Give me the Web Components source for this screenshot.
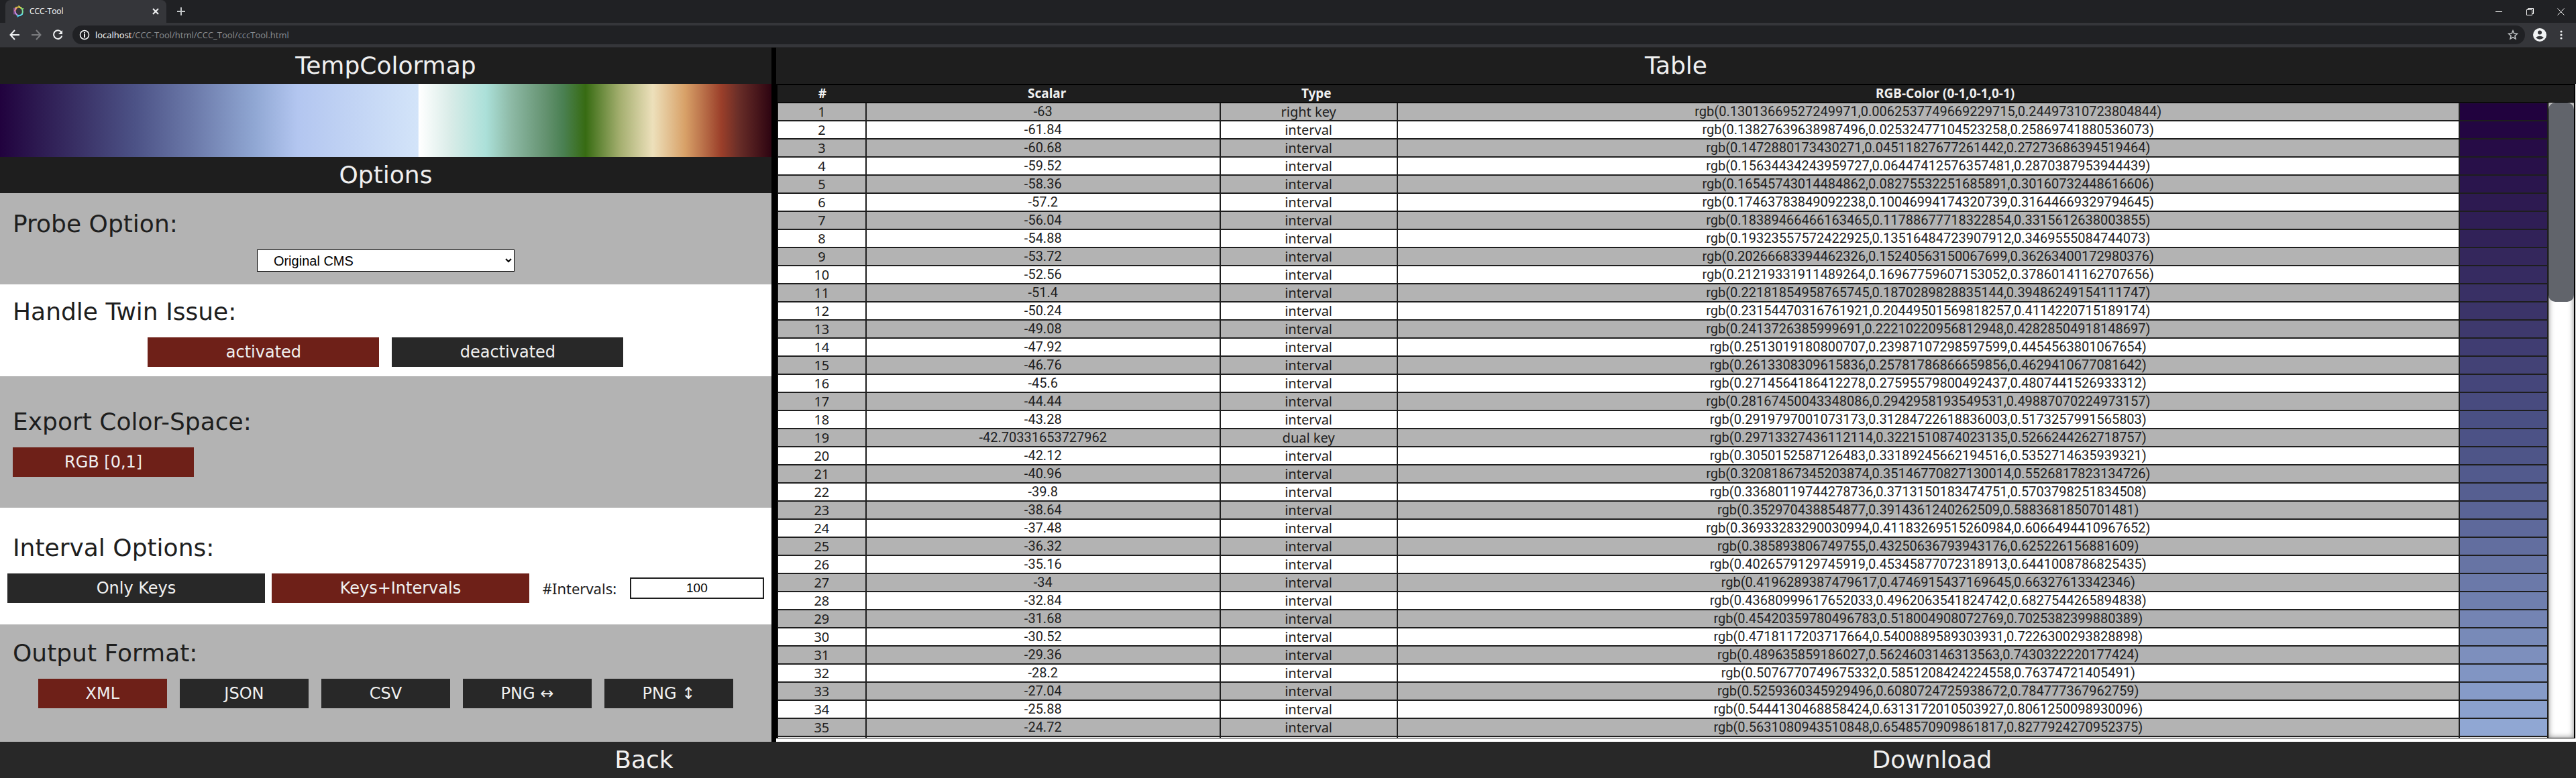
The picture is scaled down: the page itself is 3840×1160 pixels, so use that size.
<!DOCTYPE html>
<html lang="en">
<head>
<meta charset="utf-8">
<title>CCC-Tool</title>
<style>
  html, body { height: 100%; margin: 0; }
  body {
    --dark: #1e1e1e; --button: #282828; --active: #6e2018; --stripe: #b3b3b3; --light: #f0f0f0;
    --display: "DejaVu Sans", sans-serif;
    --text: "Noto Sans", "Open Sans", sans-serif;
    --digits: Roboto, sans-serif;
    background: #fff; color: var(--dark); overflow: hidden;
  }
</style>
</head>
<body>
<ccc-app></ccc-app>

<template id="t-chrome">
  <style>
    :host { display: block; font: 12px/16px "Open Sans", sans-serif; color: #fff; background: #202124; }
    svg { display: block; fill: none; stroke: #f1f3f4; stroke-width: 2; }
    button { all: unset; display: grid; place-items: center; width: 32px; height: 32px; }
    .tabs { display: flex; height: 34px; padding-left: 8px; align-items: center; }
    .tab { display: flex; align-items: center; gap: 8px; box-sizing: border-box; width: 240px; height: 34px; padding: 0 0 0 12px; background: #35363a; border-radius: 8px 8px 0 0; }
    .tab span { flex: 1; }
    .new { margin-left: 6px; }
    .wins { margin-left: auto; display: flex; }
    .wins button { width: 46px; }
    .wins svg { stroke-width: 1; stroke: #fff; }
    .bar { display: flex; align-items: center; height: 36px; padding: 0 6px; background: #35363a; border-bottom: 1px solid #29292b; }
    .omni { flex: 1; display: flex; align-items: center; gap: 8px; height: 28px; margin: 0 6px; padding: 0 10px; border-radius: 14px; background: #202124; font-size: 13px; color: #8b8d90; }
    .omni .url { flex: 1; }
    b { font-weight: 400; color: #fff; }
  </style>
  <div class="tabs">
    <div class="tab">
      <svg width="16" height="18" viewBox="0 0 16 18" stroke-linecap="round">
        <path d="M3 4Q7 1 12 4" stroke="#d9c13e"/><path d="M8 1L11 4" stroke="#efe04a" stroke-width="1.4"/>
        <path d="M12 4Q15 8 13 13" stroke="#7fe0a0"/><path d="M12 5L15 5" stroke="#8ce06a" stroke-width="1.4"/>
        <path d="M13 13Q9 17 5 14" stroke="#5fdcec"/><path d="M6 17L9 15" stroke="#4ad0f0" stroke-width="1.4"/>
        <path d="M5 14Q1 10 3 5" stroke="#c98be8"/><path d="M1 4L1 13" stroke="#a85fb8" stroke-width="1.2"/><path d="M2 8L5 4" stroke="#f09078" stroke-width="1.6"/>
      </svg>
      <span>CCC-Tool</span>
      <button aria-label="Close tab"><svg width="10" height="10"><path d="M1 1L9 9M9 1L1 9"/></svg></button>
    </div>
    <button class="new" aria-label="New tab"><svg width="12" height="12" style="stroke:#c4c7c9"><path d="M6 0V12M0 6H12"/></svg></button>
    <div class="wins">
      <button aria-label="Minimize"><svg width="10" height="10"><path d="M0 5.500H10"/></svg></button>
      <button aria-label="Restore"><svg width="11" height="11"><path d="M.5 2.500H8.500V10.500H.5ZM2.500 2V.5H10.500V8.500H9"/></svg></button>
      <button aria-label="Close"><svg width="11" height="11"><path d="M.5 .5L10.500 10.500M10.500 .5L.5 10.500"/></svg></button>
    </div>
  </div>
  <div class="bar">
    <button aria-label="Back"><svg width="16" height="16"><path d="M15 8H2M8 1L1.500 8L8 15"/></svg></button>
    <button aria-label="Forward"><svg width="16" height="16" style="stroke:#7b7c7f"><path d="M1 8H14M8 1L14.500 8L8 15"/></svg></button>
    <button aria-label="Reload"><svg width="16" height="16"><path d="M13.500 4A6.300 6.300 0 1 0 14.300 9.500"/><path d="M15 1V7H9Z" fill="#f1f3f4" stroke="none"/></svg></button>
    <div class="omni">
      <svg width="16" height="16"><circle cx="8" cy="8" r="6.500" stroke-width="1.600"/><path d="M8 7V12M8 4V6"/></svg>
      <span class="url"><b>localhost</b>/CCC-Tool/html/CCC_Tool/cccTool.html</span>
      <svg width="16" height="16" style="stroke:#c4c7c9;stroke-width:1.500"><path d="M8 1.800L9.800 6.100L14.400 6.400L10.900 9.400L12 13.900L8 11.500L4 13.900L5.100 9.400L1.600 6.400L6.200 6.100Z"/></svg>
    </div>
    <button aria-label="Profile"><svg width="20" height="20"><circle cx="10" cy="10" r="10" fill="#f1f3f4" stroke="none"/><circle cx="10" cy="6.500" r="3" fill="#35363a" stroke="none"/><path d="M4 14Q10 9.500 16 14Q10 19.500 4 14Z" fill="#35363a" stroke="none"/></svg></button>
    <button aria-label="Menu"><svg width="4" height="16"><g fill="#f1f3f4" stroke="none"><circle cx="2" cy="3" r="1.600"/><circle cx="2" cy="8" r="1.600"/><circle cx="2" cy="13" r="1.600"/></g></svg></button>
  </div>
</template>

<template id="t-title">
  <style>
    :host { display: block; background: var(--dark); color: var(--light); }
    h1 { margin: 0; font: 400 36px/54px var(--display); text-align: center; }
  </style>
  <h1><slot></slot></h1>
</template>

<template id="t-button">
  <style>
    :host { display: block; }
    button { display: block; width: 100%; height: 44px; margin: 0; padding: 0; border: 0; border-radius: 0; background: var(--button); color: var(--light); font: 24px/44px var(--display); }
    :host([active]) button { background: var(--active); }
  </style>
  <button type="button"><slot></slot></button>
</template>

<template id="t-section">
  <style>
    :host { display: flex; flex-direction: column; gap: 16px; box-sizing: border-box; background: #fff; }
    :host(:nth-of-type(odd)) { background: var(--stripe); }
    .row { display: flex; justify-content: center; align-items: center; gap: 19px; }
  </style>
  <slot name="label"></slot>
  <div class="row"><slot></slot></div>
</template>

<template id="t-options">
  <style>
    :host { display: flex; flex-direction: column; min-height: 0; }
    option-section:nth-of-type(1) { padding: 24px 0 19px; }
    option-section:nth-of-type(2) { padding: 19px 0 14px; }
    option-section:nth-of-type(3) { padding: 46px 0; }
    option-section:nth-of-type(4) { padding: 38px 0 32px; }
    option-section:nth-of-type(5) { padding: 21px 0; flex: 1; }
    [slot="label"] { margin: 0 0 0 19px; font: 400 36px/44px var(--display); }
    select { box-sizing: border-box; width: 33.4%; height: 33px; padding: 0 0 0 20px; border: 1px solid #000; border-radius: 0; background: #fff; color: #000; font: 20px "Liberation Sans", sans-serif; }
    .half { width: 30%; }
    .space { width: 23.5%; margin: 0 auto 0 19px; }
    .intervals { display: grid; grid-template-columns: 384fr 384fr 130fr 200fr; flex: 1; gap: 10px; padding: 0 11px; align-items: center; }
    .intervals label { text-align: center; font: 22px/32px var(--text); }
    .intervals input { min-width: 0; box-sizing: border-box; height: 32px; padding: 0; border: 2px solid var(--dark); border-radius: 0; background: #fff; color: #000; text-align: center; font: 19px "Liberation Sans", sans-serif; }
    .format { width: 16.7%; }
  </style>
  <option-section>
    <label slot="label" for="probe">Probe Option:</label>
    <select id="probe"><option>Original CMS</option></select>
  </option-section>
  <option-section>
    <h2 slot="label">Handle Twin Issue:</h2>
    <ccc-button class="half" active>activated</ccc-button>
    <ccc-button class="half">deactivated</ccc-button>
  </option-section>
  <option-section>
    <h2 slot="label">Export Color-Space:</h2>
    <ccc-button class="space" active>RGB [0,1]</ccc-button>
  </option-section>
  <option-section>
    <h2 slot="label">Interval Options:</h2>
    <div class="intervals">
      <ccc-button>Only Keys</ccc-button>
      <ccc-button active>Keys+Intervals</ccc-button>
      <label for="count">#Intervals:</label>
      <input id="count" type="text" inputmode="numeric" value="100">
    </div>
  </option-section>
  <option-section>
    <h2 slot="label">Output Format:</h2>
    <ccc-button class="format" active>XML</ccc-button>
    <ccc-button class="format">JSON</ccc-button>
    <ccc-button class="format">CSV</ccc-button>
    <ccc-button class="format">PNG ↔</ccc-button>
    <ccc-button class="format">PNG ↕</ccc-button>
  </option-section>
</template>

<template id="t-table">
  <style>
    :host { display: flex; flex-direction: column; min-height: 0; box-sizing: border-box; border: 2px solid #000; border-bottom-width: 1px; margin: 0 1px 5px 0; }
    table { width: 100%; table-layout: fixed; border-spacing: 0; text-align: center; font: 20px/25px var(--text); }
    th { padding: 0; height: 25px; background: var(--dark); color: var(--light); font-size: 19px; }
    .n, .c { width: 5%; } .s { width: 20%; } .t { width: 10%; }
    .body { flex: 1; display: flex; min-height: 0; border-top: 1px solid #000; }
    .view { flex: 1; overflow: hidden; border-right: 1px solid #000; }
    td { padding: 0; height: 25px; border: 1px solid var(--dark); background: #fff; }
    tr:nth-child(odd) td { background-color: var(--stripe); }
    td:nth-child(2), td:nth-child(4) { font-family: var(--digits); }
    .track { width: 38px; box-shadow: inset 0 0 8px #808080; background: #fff; }
    .thumb { height: 31.400%; border-radius: 10px; background: #61646b; }
  </style>
  <table class="head"><thead><tr><th class="n">#</th><th class="s">Scalar</th><th class="t">Type</th><th>RGB-Color (0-1,0-1,0-1)</th><th class="c"></th></tr></thead></table>
  <div class="body">
    <div class="view"><table><colgroup><col class="n"><col class="s"><col class="t"><col><col class="c"></colgroup><tbody></tbody></table></div>
    <div class="track"><div class="thumb"></div></div>
  </div>
</template>

<template id="t-footer">
  <style>
    :host { display: flex; background: var(--button); }
    button { all: unset; flex: 1; text-align: center; color: var(--light); font: 36px/54px var(--display); }
  </style>
  <button type="button">Back</button><button type="button">Download</button>
</template>

<template id="t-app">
  <style>
    :host { display: flex; flex-direction: column; height: 100vh; }
    main { flex: 1; min-height: 0; display: grid; grid-template-columns: 3fr 7px 7fr; }
    .left, .right { display: flex; flex-direction: column; min-width: 0; min-height: 0; }
    .divider { background: #000; }
    .map { height: 109px; background: linear-gradient(90deg, #21023e 0, #2d1a51 5%, #393065 10%, #4c5286 17.5%, #6b79a9 25%, #90a7d3 33%, #b3c6f0 38.6%, #d3e4f9 54.2%, #fff 54.3%, #d9ece8 58.4%, #abe0d9 63%, #8db9a5 66.3%, #649270 70.7%, #4a8052 73%, #376b12 75.9%, #a3ae6e 80.3%, #ede0bb 84.6%, #d8a168 88.8%, #9b3f2a 93.5%, #6a2e28 95.7%, #2d0411 100%); }
    options-panel, color-table { flex: 1; }
  </style>
  <browser-chrome></browser-chrome>
  <main>
    <div class="left">
      <title-bar>TempColormap</title-bar>
      <div class="map"></div>
      <title-bar>Options</title-bar>
      <options-panel></options-panel>
    </div>
    <div class="divider"></div>
    <div class="right">
      <title-bar>Table</title-bar>
      <color-table></color-table>
    </div>
  </main>
  <page-footer></page-footer>
</template>

<script>
const ROWS = `
-63|right key|0.13013669527249971,0.0062537749669229715,0.24497310723804844
-61.84|interval|0.13827639638987496,0.02532477104523258,0.25869741880536073
-60.68|interval|0.1472880173430271,0.04511827677261442,0.27273686394519464
-59.52|interval|0.15634434243959727,0.06447412576357481,0.2870387953944439
-58.36|interval|0.16545743014484862,0.08275532251685891,0.30160732448616606
-57.2|interval|0.17463783849092238,0.10046994174320739,0.31644669329794645
-56.04|interval|0.18389466466163465,0.11788677718322854,0.3315612638003855
-54.88|interval|0.19323557572422925,0.13516484723907912,0.3469555084744073
-53.72|interval|0.20266683394462326,0.15240563150067699,0.36263400172980376
-52.56|interval|0.21219331911489264,0.16967759607153052,0.37860141162707656
-51.4|interval|0.22181854958765745,0.1870289828835144,0.39486249154111747
-50.24|interval|0.23154470316761921,0.20449501569818257,0.4114220715189174
-49.08|interval|0.2413726385999691,0.22210220956812948,0.42828504918148697
-47.92|interval|0.2513019180800707,0.23987107298597599,0.4454563801067654
-46.76|interval|0.2613308309615836,0.25781786866659856,0.4629410677081642
-45.6|interval|0.2714564186412278,0.27595579800492437,0.4807441526933312
-44.44|interval|0.28167450043348086,0.2942958193549531,0.49887070224973157
-43.28|interval|0.2919797001073173,0.31284722618836003,0.5173257991565803
-42.70331653727962|dual key|0.29713327436112114,0.3221510874023135,0.5266244262718757
-42.12|interval|0.3050152587126483,0.33189245662194516,0.5352714635939321
-40.96|interval|0.32081867345203874,0.35146770827130014,0.5526817823134726
-39.8|interval|0.33680119744278736,0.3713150183474751,0.5703798251834508
-38.64|interval|0.352970438854877,0.3914361240262509,0.5883681850701481
-37.48|interval|0.36933283290030994,0.41183269515260984,0.6066494410967652
-36.32|interval|0.385893806749755,0.43250636793943176,0.625226156881609
-35.16|interval|0.4026579129745919,0.45345877072318913,0.6441008786825435
-34|interval|0.4196289387479617,0.4746915437169645,0.66327613342346
-32.84|interval|0.43680999617652033,0.4962063541824742,0.6827544265894838
-31.68|interval|0.45420359780496783,0.518004908072769,0.7025382399880389
-30.52|interval|0.4718117203717664,0.5400889589303931,0.7226300293828898
-29.36|interval|0.489635859186027,0.5624603146313563,0.7430322220177424
-28.2|interval|0.5076770749675332,0.5851208424224558,0.76374721405491
-27.04|interval|0.5259360345929496,0.6080724725938672,0.784777367962759
-25.88|interval|0.5444130468858424,0.6313172010503927,0.8061250098930096
-24.72|interval|0.5631080943510848,0.6548570909861817,0.8277924270952375
`.trim().split('\n').map(line => line.split('|'));

const define = (name, id, setup) => customElements.define(name, class extends HTMLElement {
  constructor() {
    super();
    const root = this.attachShadow({ mode: 'open' });
    root.append(document.getElementById(id).content.cloneNode(true));
    if (setup) setup(root);
  }
});

define('browser-chrome', 't-chrome');
define('title-bar', 't-title');
define('ccc-button', 't-button');
define('option-section', 't-section');
define('options-panel', 't-options');
define('page-footer', 't-footer');
define('color-table', 't-table', root => {
  const body = root.querySelector('tbody');
  ROWS.forEach(([scalar, type, rgb], i) => {
    const tr = body.insertRow();
    for (const text of [i + 1, scalar, type, `rgb(${rgb})`]) tr.insertCell().textContent = text;
    const bytes = rgb.split(',').map(v => Math.round(v * 255));
    tr.insertCell().style.backgroundColor = `rgb(${bytes})`;
  });
  // the next row is cut off by the lower edge of the view
  const next = body.insertRow();
  for (let i = 0; i < 5; i++) next.insertCell();
});
define('ccc-app', 't-app');
</script>
</body>
</html>
